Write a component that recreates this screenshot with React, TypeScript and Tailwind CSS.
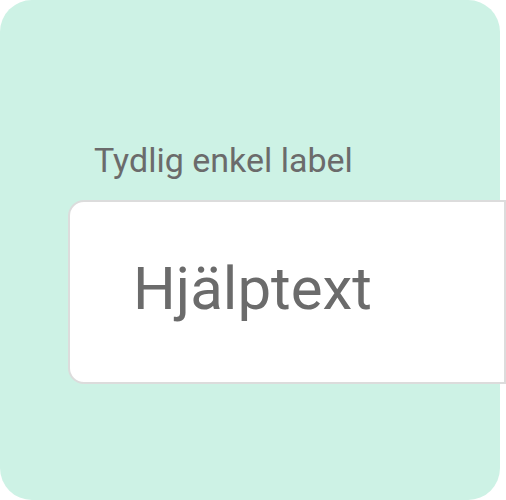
export default function App() {
  return (
    <div className="w-[506px] h-[500px] bg-white">
      <div
        className="w-[500px] h-[500px] rounded-[32px] bg-[#cdf2e5] pt-[140px] pl-[68px] flex flex-col"
        style={{ fontFamily: 'Roboto, "Noto Sans", sans-serif' }}
      >
        <label htmlFor="help" className="pl-[26px] text-[34px] leading-[40px] text-[#6b6b6b]">
          Tydlig enkel label
        </label>
        <input
          id="help"
          readOnly
          placeholder="Hjälptext"
          className="mt-[20px] w-[438px] h-[184px] rounded-l-[16px] border-2 border-[#dcdcdc] bg-white pl-[63px] pb-[7px] text-[60px] text-[#6b6b6b] placeholder:text-[#6b6b6b] outline-none"
        />
      </div>
    </div>
  );
}
